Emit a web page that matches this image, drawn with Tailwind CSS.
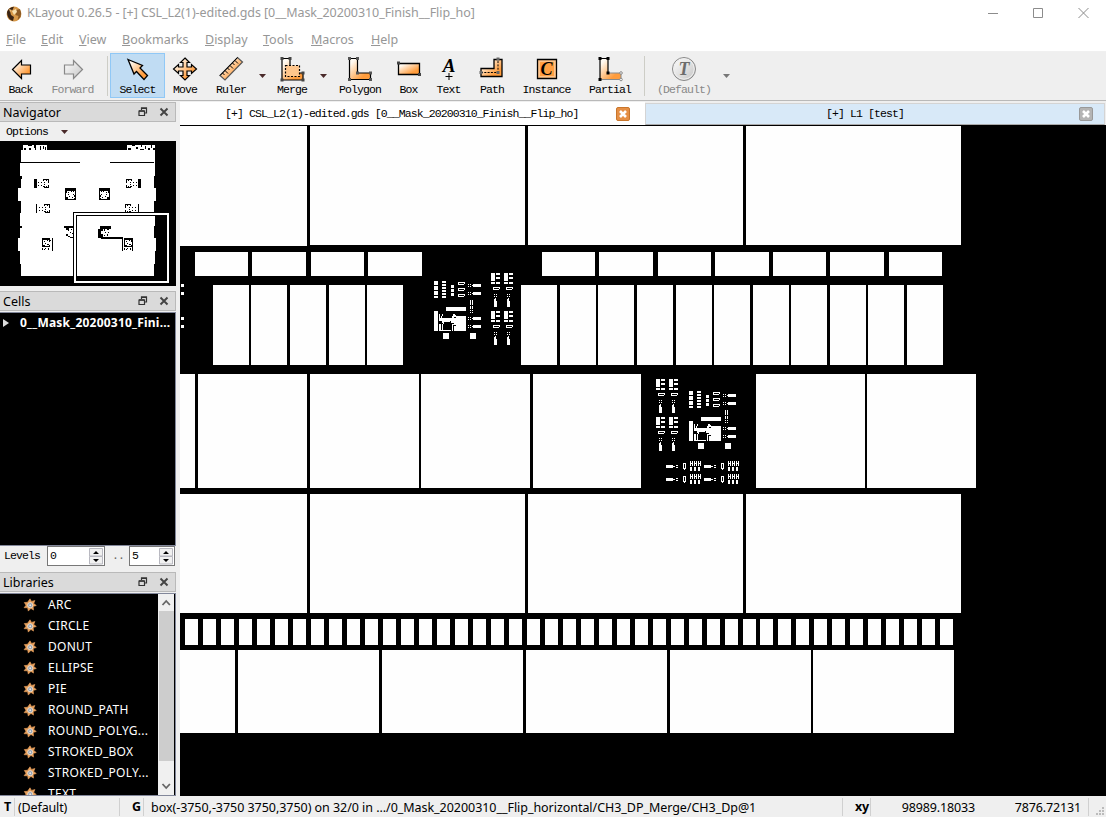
<!DOCTYPE html>
<html lang="en">
<head>
<meta charset="utf-8">
<title>KLayout</title>
<script src="https://cdn.jsdelivr.net/npm/@tailwindcss/browser@4"></script>
</head>
<body class="w-[1106px] h-[817px] overflow-hidden flex flex-col bg-[#efefef] font-['Noto_Sans',sans-serif] text-[12px] text-black leading-4">
<svg class="absolute w-0 h-0">
  <defs>
    <linearGradient id="og" x1="0" y1="0" x2="1" y2="1"><stop offset=".15" stop-color="#fffaf2"/><stop offset=".75" stop-color="#ff9c3c"/></linearGradient>
    <linearGradient id="gg" x1="0" y1="0" x2="1" y2="1"><stop offset="0" stop-color="#fff"/><stop offset="1" stop-color="#c4c4c4"/></linearGradient>
    <symbol id="dock" viewBox="0 0 10 10"><path d="M3.500 3V1h5v5H7M1 4h5.500v4.500H1z" fill="none" stroke="#333" stroke-width="1.200"/><path d="M1 4h5.500M3 1.200h6" stroke="#333" stroke-width="1.600"/></symbol>
    <symbol id="x" viewBox="0 0 10 10"><path d="M1.500 1.500l7 7M8.500 1.500l-7 7" stroke="#444" stroke-width="1.900"/></symbol>
    <symbol id="gear" viewBox="0 0 14 14"><path d="M7 .8l1.500 2.600 3.400-.9-1.200 2.900 2.600 2.100-3.100.9.300 3.700-2.600-1.700-2.600 2.700-.7-3.300-3.500-.1 1.900-2.500L1.300 4.500l3.200-.2z" fill="#e8a05c" stroke="#e8a05c" stroke-width=".6"/><circle cx="7.200" cy="7.200" r="2.600" fill="#8fa0b4" stroke="#f6dfc4" stroke-width=".9"/><circle cx="7.200" cy="7.200" r="1" fill="#efe6dc"/></symbol>
  </defs>
</svg>

<!-- Title bar -->
<header class="h-[27px] bg-white flex items-center text-[#999]">
  <svg class="ml-[6px] w-4 h-4 shrink-0" viewBox="0 0 16 16"><circle cx="8" cy="8" r="7.400" fill="#d79848"/><path d="M1 6Q3 1 8 .8L6.500 4 4 5l1 4 3 2-1 4Q1 13 1 6z" fill="#3a2414"/><path d="M10 4l4-1q2 4 .5 8l-3 3 1-4-3-1z" fill="#8c5a24"/><path d="M6 5l4-2 1 3-3 3z" fill="#f7dfae"/><path d="M3 3l3 1-2 2z" fill="#e9b871"/></svg>
  <span class="ml-[5px] mt-[-2px] whitespace-nowrap text-[12.500px] tracking-[-0.060px]">KLayout 0.26.5 - [+] CSL_L2(1)-edited.gds [0__Mask_20200310_Finish__Flip_ho]</span>
  <svg class="ml-auto mr-[16px] mt-[-2px] w-[104px] h-3 shrink-0" viewBox="0 0 104 12" fill="none" stroke="#8c8c8c"><path d="M2 6.500h10M47.500 1.500h9v9h-9zM92.500 1l10 10M102.500 1l-10 10"/></svg>
</header>

<!-- Menu bar -->
<nav class="h-[25px] shrink-0 bg-white border-b border-[#f0f0f0] flex items-center pl-[6px] pt-[2px] text-[12.500px] text-[#969696]">
  <span class="w-[35px]"><u>F</u>ile</span><span class="w-[38px]"><u>E</u>dit</span><span class="w-[43px]"><u>V</u>iew</span><span class="w-[83px]"><u>B</u>ookmarks</span><span class="w-[58px]"><u>D</u>isplay</span><span class="w-[48px]"><u>T</u>ools</span><span class="w-[60px]"><u>M</u>acros</span><span><u>H</u>elp</span>
</nav>

<!-- Tool bar -->
<section class="h-[49px] shrink-0 border-b border-[#b9b9b9] flex font-['Liberation_Mono',monospace] text-[11.500px] tracking-[-0.900px] leading-3">
  <div class="w-[41px] flex flex-col items-center pt-[4px]"><svg class="w-7 h-7 shrink-0" viewBox="0 0 28 28"><path d="M5.500 13.500L14.500 4.500V9h9v9h-9v4.500z" fill="url(#og)" stroke="#000" stroke-width="1.200"/></svg>Back</div>
  <div class="w-[63px] flex flex-col items-center pt-[4px] text-[#888]"><svg class="w-7 h-7 shrink-0" viewBox="0 0 28 28"><path d="M23.500 13.500L14.500 4.500V9h-9v9h9v4.500z" fill="url(#gg)" stroke="#888" stroke-width="1.200"/></svg>Forward</div>
  <div class="w-[6px] flex justify-center py-[4px]"><i class="w-px bg-[#cdcdc6]"></i></div>
  <div class="w-[55px] h-[45px] mt-px flex flex-col items-center pt-[2px] bg-[#c0dcf3] border border-[#90c8f6]"><svg class="w-7 h-7 shrink-0" viewBox="0 0 28 28"><path d="M4 3.500L18.500 9.500 16 12l7.500 7.500-3.500 4L12.500 15.500 10 18z" fill="url(#og)" stroke="#000" stroke-width="1.300"/></svg>Select</div>
  <div class="w-[40px] flex flex-col items-center pt-[4px]"><svg class="w-7 h-7 shrink-0" viewBox="0 0 28 28"><path d="M14 2l4.500 4.500H16V11h4.500V8.500L25.500 13l-5 4.500V15H16v4.500h2.500L14 24l-4.500-4.500H12V15H7.500v2.500L2.500 13l5-4.500V11H12V6.500H9.500z" fill="url(#og)" stroke="#000" stroke-width="1.200"/></svg>Move</div>
  <div class="w-[52px] flex flex-col items-center pt-[4px]"><svg class="w-7 h-7 shrink-0" viewBox="0 0 28 28"><path d="M3 19.500L20.500 1.500l5 4.500L8 24z" fill="url(#og)" stroke="#555" stroke-width="1.200"/><path d="M3 19.500L20.500 1.500M5.500 17l2 2M8 14.500l3 3M10.500 12l2 2M13 9.500l3 3M15.500 7l2 2M18 4.500l3 3" stroke="#000"/></svg>Ruler</div>
  <div class="w-[11px] flex justify-center pt-[22px]"><svg class="w-[7px] h-1" viewBox="0 0 7 4"><path d="M0 0h7L3.500 4z" fill="#4a2a2a"/></svg></div>
  <div class="w-[48px] flex flex-col items-center pt-[4px]"><svg class="w-7 h-7 shrink-0" viewBox="0 0 28 28"><path d="M4 2.500h8V17h13v7H4z" fill="url(#og)" stroke="#000" stroke-width="1.200"/><path d="M7.500 9.500h14v11h-14z" fill="#ffc68c" stroke="#000" stroke-dasharray="2 1.500" stroke-width="1.200"/><path d="M2.500 1h3v3h-3zM10.500 1h3v3h-3zM23.500 15.500h3v3h-3zM23.500 22.500h3v3h-3zM2.500 22.500h3v3h-3z" fill="#444"/></svg>Merge</div>
  <div class="w-[14px] flex justify-center pt-[22px]"><svg class="w-[7px] h-1" viewBox="0 0 7 4"><path d="M0 0h7L3.500 4z" fill="#4a2a2a"/></svg></div>
  <div class="w-[60px] flex flex-col items-center pt-[4px]"><svg class="w-7 h-7 shrink-0" viewBox="0 0 28 28"><path d="M3.500 2.500h8V17h13v6.500h-21z" fill="url(#og)" stroke="#000" stroke-width="1.200"/><path d="M2 1h3v3H2zM10 1h3v3h-3zM10 15.500h3v3h-3zM23 15.500h3v3h-3zM23 22h3v3h-3zM2 22h3v3H2z" fill="#555"/></svg>Polygon</div>
  <div class="w-[37px] flex flex-col items-center pt-[4px]"><svg class="w-7 h-7 shrink-0" viewBox="0 0 28 28"><path d="M3.500 7.500h21v11h-21z" fill="url(#og)" stroke="#000" stroke-width="1.300"/><path d="M2 5.500h3v3H2zM23 17h3v3h-3z" fill="#444"/></svg>Box</div>
  <div class="w-[43px] flex flex-col items-center pt-[4px]"><svg class="w-7 h-7 shrink-0" viewBox="0 0 28 28"><text x="14" y="16" text-anchor="middle" font-family="Liberation Serif" font-style="italic" font-weight="bold" font-size="19" letter-spacing="0">A</text><path d="M14 17v7M10.500 20.500h7" stroke="#000"/></svg>Text</div>
  <div class="w-[44px] flex flex-col items-center pt-[4px]"><svg class="w-7 h-7 shrink-0" viewBox="0 0 28 28"><path d="M3 12.500h13V3.500h8v17H3z" fill="url(#og)" stroke="#000" stroke-width="1.300"/><path d="M3 16.500h17V3" fill="none" stroke="#000" stroke-dasharray="2 1.300"/><path d="M1.500 15h3v3h-3zM18.500 15h3v3h-3zM18.500 1.500h3v3h-3z" fill="#666"/></svg>Path</div>
  <div class="w-[65px] flex flex-col items-center pt-[4px]"><svg class="w-7 h-7 shrink-0" viewBox="0 0 28 28"><path d="M4.500 3.500h19v19h-19z" fill="#ffc48a" stroke="#000" stroke-width="1.300"/><path d="M7 6h14v14H7z" fill="#ff9f42"/><text x="13.500" y="19" text-anchor="middle" font-family="Liberation Serif" font-style="italic" font-weight="bold" font-size="18" letter-spacing="0">C</text></svg>Instance</div>
  <div class="w-[62px] flex flex-col items-center pt-[4px]"><svg class="w-7 h-7 shrink-0" viewBox="0 0 28 28"><path d="M4 2.500h8V17h13v6.500H4z" fill="url(#og)"/><path d="M12 17h13v6.500H4" fill="none" stroke="#888"/><path d="M12 17V2.500H4v21" fill="none" stroke="#000" stroke-width="1.200"/><path d="M2.500 1h3v3h-3zM10.500 1h3v3h-3zM10.500 15.500h3v3h-3zM2.500 22h3v3h-3z"/><circle cx="25" cy="17" r="1.300" fill="#fff" stroke="#888"/><circle cx="25" cy="23.500" r="1.300" fill="#fff" stroke="#888"/></svg>Partial</div>
  <div class="w-[6px] flex justify-center py-[4px]"><i class="w-px bg-[#cdcdc6]"></i></div>
  <div class="w-[74px] flex flex-col items-center pt-[4px] text-[#888]"><svg class="w-7 h-7 shrink-0" viewBox="0 0 28 28"><circle cx="14" cy="13" r="11.500" fill="url(#gg)" stroke="#888"/><circle cx="14" cy="13" r="10.200" fill="none" stroke="#eee"/><text x="14" y="19" text-anchor="middle" font-family="Liberation Serif" font-style="italic" font-weight="bold" font-size="18" letter-spacing="0" fill="#6c6c6c">T</text></svg>(Default)</div>
  <div class="w-[11px] flex justify-center pt-[22px]"><svg class="w-[7px] h-1" viewBox="0 0 7 4"><path d="M0 0h7L3.500 4z" fill="#777"/></svg></div>
</section>

<main class="h-[695px] shrink-0 flex">
  <!-- Docked panels -->
  <aside class="w-[176px] mr-1 shrink-0 flex flex-col">
    <div class="h-[20px] mt-px shrink-0 bg-[#dadada] border border-l-0 border-[#b9b9b9] flex items-center pl-[3px] pr-[6px] text-[12.500px]"><span class="pt-[2px]">Navigator</span><svg class="ml-auto w-[10px] h-[10px]"><use href="#dock"/></svg><svg class="ml-[11px] w-[10px] h-[10px]"><use href="#x"/></svg></div>
    <div class="h-[19px] shrink-0 flex items-center pl-[6px] pt-px font-['Liberation_Mono',monospace] text-[11.500px] tracking-[-0.900px]">Options<svg class="ml-[13px] w-[7px] h-1" viewBox="0 0 7 4"><path d="M0 0h7L3.500 4z" fill="#4a2a2a"/></svg></div>
    <svg class="w-[176px] h-[145px] shrink-0 bg-black" viewBox="0 123 528 435" shape-rendering="crispEdges">
      <path fill="#fff" d="M69 135h72v15h240v-15h84v93h-3v36h6v39h-6v36h3v39h-3v36h6v39h-3v39h-3v36H63v-36h-3v-39h-6v-39h6v-30h6v-6h-6v-39h3v-36h-9v-39h9v-27h3v-9h-6v-39h3v-39h6z"/>
      <path d="M61 186h179v3H61zM330 186h133v3H330z"/>
      <path d="M72 144h6v6h-6zM84 135h12v3H84zM87 144h6v6h-6zM102 135h6v9h-6zM105 144h3v6h-3zM120 138h3v12h-3zM129 138h3v9h-3zM136 141h3v9h-3zM384 144h9v6h-9zM396 135h9v3h-9zM408 141h6v6h-6zM420 147h12v3h-12zM423 135h3v6h-3zM435 138h3v9h-3zM444 144h6v6h-6zM453 135h3v9h-3zM459 144h6v6h-6z"/>
      <path id="navchips"/>
      <path fill="none" stroke="#000" stroke-width="3" d="M220.500 337.500h288v213h-288zM229.500 346.500h270v195h-270z"/>
      <path fill="#fff" fill-rule="evenodd" d="M222 339h285v210H222zM228 345v198h273V345z"/>
    </svg>
    <div class="h-[20px] mt-[5px] shrink-0 bg-[#dadada] border border-l-0 border-[#b9b9b9] flex items-center pl-[3px] pr-[6px] text-[12.500px]"><span class="pt-[2px]">Cells</span><svg class="ml-auto w-[10px] h-[10px]"><use href="#dock"/></svg><svg class="ml-[11px] w-[10px] h-[10px]"><use href="#x"/></svg></div>
    <div class="h-[234px] mt-px shrink-0 bg-black border border-l-0 border-[#82879a] text-white font-bold flex items-start pl-[3px] pt-[2px]"><svg class="w-[6px] h-2 mt-[4px] mr-[11px]" viewBox="0 0 6 8"><path d="M0 0l6 4-6 4z" fill="#ddd"/></svg><span class="whitespace-nowrap text-[12px] tracking-[0.220px]">0__Mask_20200310_Fini...</span></div>
    <div class="h-[26px] shrink-0 flex items-start font-['Liberation_Mono',monospace] text-[11.500px] leading-[18px] tracking-[-0.900px] whitespace-nowrap pl-[4px]">
      <span class="w-[43px] pt-px">Levels</span>
      <div class="w-[58px] h-[20px] border border-[#777] bg-white flex items-center pl-[2px] pr-px"><span>0</span><svg class="ml-auto w-[14px] h-[17px]" viewBox="0 0 14 17"><path d="M.5.500h13v7.500H.5zM.5 8.500h13V16H.5z" fill="#f0f0f0" stroke="#b8b8c0"/><path d="M4 6l3-3 3 3zM4 11l3 3 3-3z"/></svg></div>
      <span class="w-[24px] pl-[7px] pt-px text-[#666]">..</span>
      <div class="w-[46px] h-[20px] border border-[#777] bg-white flex items-center pl-[2px] pr-px"><span>5</span><svg class="ml-auto w-[14px] h-[17px]" viewBox="0 0 14 17"><path d="M.5.500h13v7.500H.5zM.5 8.500h13V16H.5z" fill="#f0f0f0" stroke="#b8b8c0"/><path d="M4 6l3-3 3 3zM4 11l3 3 3-3z"/></svg></div>
    </div>
    <div class="h-[20px] shrink-0 bg-[#dadada] border border-l-0 border-[#b9b9b9] flex items-center pl-[3px] pr-[6px] text-[12.500px]"><span class="pt-[2px]">Libraries</span><svg class="ml-auto w-[10px] h-[10px]"><use href="#dock"/></svg><svg class="ml-[11px] w-[10px] h-[10px]"><use href="#x"/></svg></div>
    <div class="h-[203px] mt-px shrink-0 bg-black border border-l-0 border-[#82879a] flex overflow-hidden text-white">
      <ul id="libs" class="w-[158px] shrink-0"></ul>
      <div class="w-[16px] bg-[#f0f0f0] flex flex-col items-center"><svg class="w-[16px] h-[17px] shrink-0" viewBox="0 0 16 17" fill="none" stroke="#666" stroke-width="1.800"><path d="M4.500 11l3.700-4 3.700 4"/></svg><div class="w-[15px] h-[150px] bg-[#cdcdcd]"></div><svg class="mt-auto w-[16px] h-[17px] shrink-0" viewBox="0 0 16 17" fill="none" stroke="#666" stroke-width="1.800"><path d="M4.500 6l3.700 4 3.700-4"/></svg></div>
    </div>
  </aside>

  <!-- Layout view -->
  <div class="w-[926px] flex flex-col">
    <div class="h-[24px] shrink-0 flex font-['Liberation_Mono',monospace] text-[11.500px] tracking-[-0.910px] whitespace-nowrap">
      <div class="w-[465px] mt-px bg-white flex items-center pl-[45px] pr-[15px]">[+] CSL_L2(1)-edited.gds [0__Mask_20200310_Finish__Flip_ho]<svg class="ml-auto w-[14px] h-[14px]" viewBox="0 0 14 14"><rect x=".5" y=".5" width="13" height="13" rx="1.500" fill="#e58f45" stroke="#c9762c"/><path d="M4 4l6 6M10 4l-6 6" stroke="#fff" stroke-width="2.600"/></svg></div>
      <div class="w-[460px] mt-[2px] bg-[#d8e9f8] border border-b-[#aaa] border-[#d4d4d4] flex items-center pl-[180px] pr-[11px]">[+] L1 [test]<svg class="ml-auto w-[14px] h-[14px]" viewBox="0 0 14 14"><rect x=".5" y=".5" width="13" height="13" rx="1.500" fill="#b4b4b4" stroke="#999"/><path d="M4 4l6 6M10 4l-6 6" stroke="#fff" stroke-width="2.600"/></svg></div>
    </div>
    <svg id="view" class="w-[926px] h-[671px] shrink-0 bg-black" viewBox="180 125 926 671" shape-rendering="crispEdges" fill="#fefefe">
      <defs>
        <path id="ga"/>
        <path id="gb"/>
        <path id="gc"/>
      </defs>
      <path id="cells"/>
      <g transform="translate(420 245) scale(.33333333)"><use href="#ga"/><use href="#gb"/><use href="#gb" x="39"/><use href="#gb" y="114"/><use href="#gb" x="39" y="114"/></g>
      <g transform="translate(640 370) scale(.33333333)"><use href="#ga" x="105" y="-45"/><use href="#gb" x="-165" y="-57"/><use href="#gb" x="-126" y="-57"/><use href="#gb" x="-165" y="57"/><use href="#gb" x="-126" y="57"/><use href="#gc"/><use href="#gc" x="114"/><use href="#gc" y="39"/><use href="#gc" x="114" y="39"/></g>
    </svg>
  </div>
</main>

<!-- Status bar -->
<footer class="h-[21px] shrink-0 flex items-center text-[12.500px] leading-[20px] whitespace-nowrap">
  <b class="w-[14px] pl-[4px]">T</b><span class="w-[106px] h-[18px] border-x border-[#d0d0d0] pl-[3px] tracking-[-0.150px]">(Default)</span>
  <b class="w-[23px] pl-[12px]">G</b><span class="w-[700px] h-[18px] border-x border-[#d0d0d0] pl-[7px] tracking-[-0.045px]">box(-3750,-3750 3750,3750) on 32/0 in .../0_Mask_20200310__Flip_horizontal/CH3_DP_Merge/CH3_Dp@1</span>
  <b class="w-[27px] pl-[12px] tracking-[-0.300px]">xy</b><span class="w-[105px] h-[18px] border-l border-[#d0d0d0] text-right tracking-[-0.150px]">98989.18033</span><span class="w-[114px] h-[18px] border-r border-[#d0d0d0] pr-[7px] text-right tracking-[-0.150px]">7876.72131</span>
  <svg class="ml-[7px] mt-[10px] w-[9px] h-[9px]" viewBox="0 0 9 9" fill="#bbb"><path d="M6 0h2v2H6zM3 3h2v2H3zM6 3h2v2H6zM0 6h2v2H0zM3 6h2v2H3zM6 6h2v2H6z"/></svg>
</footer>

<script>
const box = (x1, y1, x2, y2) => `M${x1} ${y1}H${x2}V${y2}H${x1}z`;
const row = (y1, y2, xs) => xs.map(([a, b]) => box(a, y1, b, y2)).join('');
const by = (xs, w) => xs.map(x => [x, x + w]);

// Large cells of the layout, row by row
const strip = [];
for (let i = 0; i < 32; i++) strip.push(185 + 18 * i);
for (let i = 0; i < 11; i++) strip.push(760 + 18 * i);
document.getElementById('cells').setAttribute('d',
  box(180,126,307,246) + row(126,245,[[310,525],[528,743],[746,961]]) +
  row(252,276,[[195,248],[252,306],[311,364],[368,422],[542,595],[599,653],[658,711],[715,769],[773,826],[830,884],[889,942]]) +
  row(285,365,by([213,251,290,329,367,521,560,598,637,676,714,753,791,830,868,907],36)) +
  [284,292,317,325].map(y => box(181,y,184,y+3)).join('') +
  row(374,488,[[180,195],[198,307],[310,419],[421,530],[533,641],[756,865],[867,976]]) +
  row(494,613,[[180,307],[310,525],[528,743],[746,961]]) +
  row(619,645,by(strip,13)) +
  row(650,733,[[180,235],[238,379],[382,523],[526,667],[670,811],[813,954]]));

const dots = (x, y) => box(x,y,x+3,y+3)+box(x+6,y,x+9,y+3)+box(x,y+6,x+3,y+9)+box(x+6,y+6,x+9,y+9);
const tag = (x, y) => `M${x} ${y}h21v6h-3v3h-18zM${x+3} ${y+3}v3h15v-3z`;
// Device block with pads, bars and the meander
let a = '';
[[108,120],[123,135],[138,150],[153,159]].forEach(([p,q]) => a += box(42,p,54,q));
[108,117,126,135,144,153].forEach(y => a += box(66,y,78,y+6));
[120,132,144].forEach(y => a += box(93,y,102,y+9));
[111,129,147].forEach(y => a += tag(114,y));
[117,141,216,240].forEach(y => a += dots(144,y) + box(159,y,183,y+9) + box(156,y+3,159,y+6));
a += box(150,165,153,180)+box(156,165,159,180)+box(150,183,153,192)+box(156,183,159,192)+dots(150,195);
a += box(78,186,138,198)+box(42,198,54,258)+box(69,264,87,282)+box(150,264,168,282);
a += box(108,213,138,258)+box(57,219,108,228)+box(57,207,60,219)+box(63,213,66,219)+box(66,207,69,213)+box(66,228,72,234)+box(57,237,63,255)+box(66,237,69,255)+box(72,228,90,231)+box(96,213,102,219)+box(99,207,105,213)+box(102,210,108,216)+box(93,228,108,234)+box(102,234,108,240)+box(96,237,102,240)+box(102,243,108,258)+box(96,240,99,258)+box(57,255,93,258)+box(69,234,72,237);
document.getElementById('ga').setAttribute('d', a);
document.getElementById('gb').setAttribute('d',
  box(213,84,225,108)+box(213,111,225,117)+box(228,84,240,90)+box(228,96,240,102)+box(228,111,240,117)+tag(218,126)+
  dots(222,147)+box(222,168,231,186)+box(225,159,228,168)+box(222,162,228,168));
// Lower row: pad, ring and combs
document.getElementById('gc').setAttribute('d',
  box(78,285,99,294)+box(99,288,105,291)+box(108,285,114,288)+box(108,291,114,294)+
  'M129 279h9v18h-3v3h-3v-3h-3zM132 282v12h3v-12z'+
  [150,162,174].map(x => box(x,273,x+3,288)+box(x+6,273,x+9,288)+box(x,279,x+9,282)+box(x,291,x+6,303)).join(''));

// Thumbnail devices in the navigator
const pts = (list, ox, oy) => list.map(([x, y, w, h]) => box(ox+x, oy+y, ox+x+w, oy+y+h)).join('');
const bracket = [[0,0,18,3],[0,3,3,3],[9,3,3,3],[15,3,3,9],[3,9,3,3],[3,15,3,3],[15,18,3,9],[0,21,6,3],[3,24,15,3],[9,21,3,3]];
const mirrored = bracket.map(([x, y, w, h]) => [18-x-w, y, w, h]);
const feet = [[-15,9,3,3],[-6,9,3,3],[-15,18,3,3],[-6,18,3,3]];
const feetR = feet.map(([x, y, w, h]) => [18-x-w, y, w, h]);
const ring = [[0,0,33,9],[0,9,3,27],[30,9,3,27],[3,33,27,3],[3,9,3,6],[9,12,3,3],[18,9,3,3],[24,9,3,3],[9,18,3,3],[24,18,3,3],[27,21,3,6],[12,24,3,3],[21,27,3,3],[3,27,6,6],[27,30,3,3]];
document.getElementById('navchips').setAttribute('d',
  pts(bracket,129,237)+pts(feet,129,237)+box(102,237,111,264)+
  pts(bracket.map(([x,y,w,h]) => [x,y,w,h]),132,312)+pts(feet,132,312)+box(108,312,111,339)+
  pts(mirrored,378,237)+pts(feetR,378,237)+box(414,237,423,264)+
  pts(mirrored,376,312)+pts(feetR,376,312)+box(415,312,418,339)+
  pts(ring,195,264)+pts(ring.map(([x,y,w,h]) => [33-x-w,y,w,h]),297,264)+
  box(192,378,220,384)+box(198,384,207,390)+box(204,390,207,393)+box(213,387,216,390)+box(210,396,213,399)+box(198,402,204,408)+box(204,408,210,411)+box(210,411,220,414)+box(216,399,219,402)+
  box(300,378,333,387)+box(294,387,303,414)+box(303,387,309,393)+box(303,411,369,416)+box(303,402,309,411)+box(312,387,315,393)+box(321,387,327,390)+box(315,396,318,399)+box(324,396,327,399)+box(312,405,315,408)+box(321,402,324,408)+
  [126,372].map((x,i) => pts([[0,0,24,6],[0,6,3,21],[0,24,24,3],[6,9,3,3],[15,6,3,3],[21,6,3,6],[9,15,3,3],[3,21,6,3],[15,18,6,3],[21,21,3,6],[0,30,3,6],[9,30,3,3],[6,33,3,3],[18,30,3,6]],x,415)).join('')+
  box(156,415,159,452)+box(366,415,369,452)+box(396,415,399,452)+box(150,421,153,424));

document.getElementById('libs').innerHTML = ['ARC','CIRCLE','DONUT','ELLIPSE','PIE','ROUND_PATH','ROUND_POLYG...','STROKED_BOX','STROKED_POLY...','TEXT']
  .map(n => `<li class="h-[21px] flex items-center pl-[23px] whitespace-nowrap"><svg class="w-[14px] h-[14px] mr-[11px] shrink-0"><use href="#gear"/></svg><span class="text-[12px] tracking-[0.280px]">${n}</span></li>`).join('');
</script>
</body>
</html>
